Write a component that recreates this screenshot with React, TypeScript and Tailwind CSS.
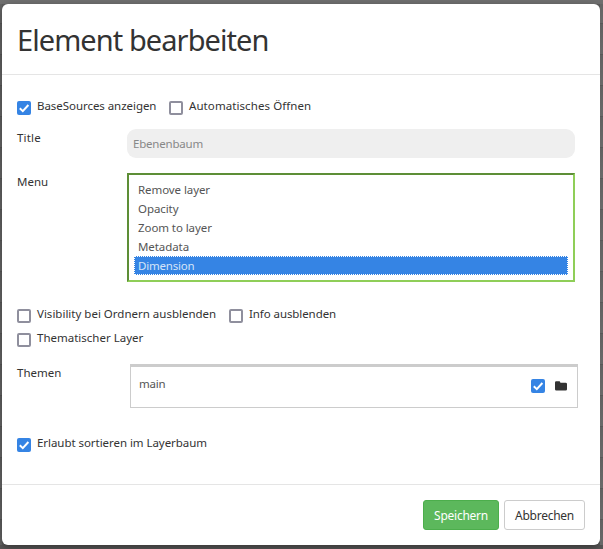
import type { ReactNode } from "react";

function Check({ on = false }: { on?: boolean }) {
  return on ? (
    <span className="flex size-[14px] shrink-0 items-center justify-center rounded-[2px] bg-[#3584e4]">
      <svg viewBox="0 0 14 14" className="size-[14px]" fill="none" stroke="#fff" strokeWidth="2">
        <path d="M2.8 7.2 5.8 10.1 11.4 4" />
      </svg>
    </span>
  ) : (
    <span className="size-[14px] shrink-0 rounded-[2px] border-2 border-[#8f8f9d] bg-white" />
  );
}

function Option({ on, label, children }: { on?: boolean; label: string; children: ReactNode }) {
  return (
    <label className="flex h-[16px] items-start">
      <span className="mt-[2px] flex">
        <Check on={on} />
      </span>
      <span className={`ml-[6px] whitespace-nowrap leading-[13px] ${label}`}>{children}</span>
    </label>
  );
}

const edge =
  "h-full bg-[linear-gradient(#616161,#6a6a6a_30px,#4f4f4f_30px,#616161_31px)] bg-[length:100%_31px] bg-[position:0_20px]";

export default function App() {
  return (
    <div className="flex h-[549px] w-[603px] flex-col overflow-hidden bg-[#5a5858] font-['Noto_Sans',sans-serif] text-[11.5px] text-[#333]">
      <div className="h-1 shrink-0 bg-[#707070]" />
      <div className="flex h-[541px] shrink-0 bg-[#5e5e5e]">
        <div className={`w-[2px] ${edge}`} />
        <div className="flex h-[541px] w-[598px] flex-col rounded-[6px] bg-white shadow-[0_3px_9px_rgba(0,0,0,0.4)]">
          <header className="flex h-[71px] items-center border-b border-[#e5e5e5] px-[15px]">
            <h1 className="whitespace-nowrap pt-[2px] text-[29px] leading-[36px] tracking-[-0.93px]">Element bearbeiten</h1>
          </header>

          <main className="h-[409px] px-[15px] pt-[24px]">
            <div className="flex gap-[13px]">
              <Option on label="w-[119px] tracking-[-0.05px]">BaseSources anzeigen</Option>
              <Option label="tracking-[0.08px]">Automatisches Öffnen</Option>
            </div>

            <div className="mt-[14px] flex h-[29px]">
              <div className="w-[110px] pt-[1px] leading-[15px] tracking-[0.2px]">Title</div>
              <div className="h-[29px] w-[448px] rounded-[9px] bg-[#efefef] pl-[6px] leading-[30px] tracking-[-0.2px] text-[#888]">
                <span>Ebenenbaum</span>
              </div>
            </div>

            <div className="mt-[15px] flex h-[109px]">
              <div className="w-[110px] pt-[1px] leading-[15px]">Menu</div>
              <div className="h-[109px] w-[448px] border-2 border-t-[#5d8e36] border-r-[#8fce58] border-b-[#8fce58] border-l-[#5d8e36] px-[5px] pt-[5px] leading-[19px] tracking-[-0.08px] text-[#555]">
                <div className="pl-1">Remove layer</div>
                <div className="pl-1">Opacity</div>
                <div className="pl-1">Zoom to layer</div>
                <div className="pl-1">Metadata</div>
                <div className="h-[19px] border border-dotted border-white bg-[#3584e4] pl-[3px] leading-[17px] tracking-[-0.2px] text-[#d5e4f8]">
                  Dimension
                </div>
              </div>
            </div>

            <div className="mt-[25px] flex gap-[12px]">
              <Option label="w-[180px]">Visibility bei Ordnern ausblenden</Option>
              <Option label="tracking-[-0.08px]">Info ausblenden</Option>
            </div>
            <div className="mt-[8px] flex">
              <Option label="">Thematischer Layer</Option>
            </div>

            <div className="mt-[17px] flex h-[44px]">
              <div className="w-[113px] pt-[1px] leading-[15px]">Themen</div>
              <div className="flex h-[44px] w-[448px] items-center border border-t-[3px] border-[#ccc] pr-[10px] pl-[8px]">
                <span className="mb-[7px] tracking-[-0.2px] text-[#555]">main</span>
                <span className="mb-[2px] ml-auto flex">
                  <Check on />
                </span>
                <svg viewBox="0 0 12 10" className="mb-[3px] ml-[10px] h-[10px] w-[12px]" fill="#333">
                  <path d="M0 1.5Q0 .3 1.2.3H4.2Q5.2.3 5.4 1.7H10.6Q12 1.7 12 3V8.3Q12 9.6 10.7 9.6H1.3Q0 9.6 0 8.3Z" />
                </svg>
              </div>
            </div>

            <div className="mt-[28px] flex">
              <Option on label="tracking-[-0.05px]">Erlaubt sortieren im Layerbaum</Option>
            </div>
          </main>

          <footer className="flex h-[61px] justify-end gap-[5px] border-t border-[#e5e5e5] pt-[15px] pr-[15px] text-[12px] tracking-[-0.25px]">
            <button className="h-[30px] w-[76px] rounded-[3px] border border-[#4cae4c] bg-[#5cb85c] pt-[2px] text-white">
              Speichern
            </button>
            <button className="h-[30px] w-[81px] rounded-[3px] border border-[#ccc] bg-white pt-[2px]">
              Abbrechen
            </button>
          </footer>
        </div>
        <div className={`w-[3px] ${edge}`} />
      </div>
    </div>
  );
}
